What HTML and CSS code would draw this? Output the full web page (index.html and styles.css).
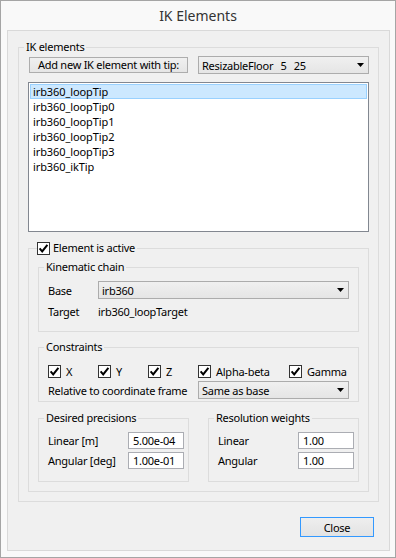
FILE: index.html
```html
<!DOCTYPE html>
<html>
<head>
<meta charset="utf-8">
<title>IK Elements</title>
<link rel="stylesheet" href="styles.css">
</head>
<body>
<div class="window">
  <div class="titlebar">IK Elements</div>
  <div class="client">
    <fieldset class="group outer">
      <legend>IK elements</legend>
      <div class="tiprow">
        <button class="btn add">Add new IK element with tip:</button>
        <div class="combo tipcombo"><span>ResizableFloor  5  25</span><svg class="arrow" viewBox="0 0 7 4"><path d="M0 0H7L3.5 4Z"/></svg></div>
      </div>
      <ul class="list">
        <li class="sel">irb360_loopTip</li>
        <li>irb360_loopTip0</li>
        <li>irb360_loopTip1</li>
        <li>irb360_loopTip2</li>
        <li>irb360_loopTip3</li>
        <li>irb360_ikTip</li>
      </ul>
      <fieldset class="group active">
        <legend class="chklegend"><span class="chk"><svg viewBox="0 0 11 11"><path d="M1.6 5.4L4.2 8.4L9.4 1.8"/></svg></span>Element is active</legend>
        <fieldset class="group kin">
          <legend>Kinematic chain</legend>
          <div class="row">
            <span class="lbl-base">Base</span>
            <div class="combo basecombo"><span>irb360</span><svg class="arrow" viewBox="0 0 7 4"><path d="M0 0H7L3.5 4Z"/></svg></div>
          </div>
          <div class="row">
            <span class="lbl-base">Target</span>
            <span>irb360_loopTarget</span>
          </div>
        </fieldset>
        <fieldset class="group cons">
          <legend>Constraints</legend>
          <div class="checks">
            <label class="cb c1"><span class="chk"><svg viewBox="0 0 11 11"><path d="M1.6 5.4L4.2 8.4L9.4 1.8"/></svg></span>X</label>
            <label class="cb c1"><span class="chk"><svg viewBox="0 0 11 11"><path d="M1.6 5.4L4.2 8.4L9.4 1.8"/></svg></span>Y</label>
            <label class="cb c1"><span class="chk"><svg viewBox="0 0 11 11"><path d="M1.6 5.4L4.2 8.4L9.4 1.8"/></svg></span>Z</label>
            <label class="cb c4"><span class="chk"><svg viewBox="0 0 11 11"><path d="M1.6 5.4L4.2 8.4L9.4 1.8"/></svg></span>Alpha-beta</label>
            <label class="cb"><span class="chk"><svg viewBox="0 0 11 11"><path d="M1.6 5.4L4.2 8.4L9.4 1.8"/></svg></span>Gamma</label>
          </div>
          <div class="row relrow">
            <span class="lbl-rel">Relative to coordinate frame</span>
            <div class="combo relcombo"><span>Same as base</span><svg class="arrow" viewBox="0 0 7 4"><path d="M0 0H7L3.5 4Z"/></svg></div>
          </div>
        </fieldset>
        <div class="pair">
          <fieldset class="group sub">
            <legend>Desired precisions</legend>
            <div class="field"><span>Linear [m]</span><input type="text" value="5.00e-04"></div>
            <div class="field"><span>Angular [deg]</span><input type="text" value="1.00e-01"></div>
          </fieldset>
          <fieldset class="group sub">
            <legend>Resolution weights</legend>
            <div class="field"><span>Linear</span><input type="text" value="1.00"></div>
            <div class="field"><span>Angular</span><input type="text" value="1.00"></div>
          </fieldset>
        </div>
      </fieldset>
    </fieldset>
    <div class="closerow"><button class="btn close">Close</button></div>
  </div>
</div>
</body>
</html>
```
FILE: styles.css
```css
* { box-sizing: border-box; }
html, body { margin: 0; padding: 0; }
body {
  width: 396px;
  height: 558px;
  overflow: hidden;
  font-family: "Noto Sans", "Open Sans", sans-serif;
  font-size: 11px;
  letter-spacing: -0.25px;
  color: #000;
  background: #fff;
}
.window {
  width: 396px;
  height: 558px;
  border: 1px solid #a5a5a5;
  background: #f9f9f9;
  display: flex;
  flex-direction: column;
}
.titlebar {
  height: 29px;
  line-height: 30px;
  text-align: center;
  font-size: 14px;
  letter-spacing: 0;
  color: #333;
}
.client {
  height: 521px;
  margin: 0 5px 0 6px;
  border: 1px solid #d9d9d9;
  background: #f0f0f0;
  display: flex;
  flex-direction: column;
}
.group {
  border: 1px solid #dcdcdc;
  margin: 0;
  min-width: 0;
  padding: 0 9px;
}
.group > legend {
  padding: 0 2px;
  margin-left: -4px;
  height: 14px;
  line-height: 14px;
}
.outer { margin: 9px 10px 0; padding-bottom: 9px; }
.tiprow {
  display: flex;
  align-items: center;
  justify-content: space-between;
  height: 18px;
  margin-top: 2px;
}
.btn {
  font: inherit;
  letter-spacing: inherit;
  color: #000;
  border: 1px solid #adadad;
  background: linear-gradient(#f0f0f0, #e5e5e5);
  padding: 0;
  margin: 0;
}
.add { width: 159px; height: 16px; line-height: 14px; margin-left: 1px; }
.combo {
  display: flex;
  align-items: center;
  justify-content: space-between;
  height: 18px;
  border: 1px solid #acacac;
  background: linear-gradient(#f0f0f0, #e5e5e5);
  padding: 0 4px 0 3px;
  white-space: pre;
  flex-shrink: 0;
}
.tipcombo { width: 171px; word-spacing: 1px; }
.arrow { width: 7px; height: 4px; fill: #000; }
.list {
  list-style: none;
  margin: 8px 0 0;
  padding: 1px;
  height: 150px;
  border: 1px solid #828790;
  background: #fff;
  letter-spacing: -0.1px;
}
.list li {
  height: 15px;
  line-height: 13px;
  border: 1px solid transparent;
  padding-left: 2px;
}
.list li.sel { background: #cce8ff; border-color: #99d1ff; }
.active { margin-top: 8px; padding: 4px 9px 9px; }
.group > legend.chklegend {
  margin-left: -1px;
  padding: 0 2px 0 0;
  height: 16px;
  line-height: 16px;
  display: flex;
  align-items: center;
}
.chk {
  width: 13px;
  height: 13px;
  border: 1px solid #333;
  background: #fff;
  display: inline-flex;
  margin-right: 3px;
  flex-shrink: 0;
}
.chk svg { width: 11px; height: 11px; fill: none; stroke: #000; stroke-width: 2; }
.kin { padding: 7px 9px 11px; }
.row { display: flex; align-items: center; height: 18px; }
.row + .row { margin-top: 3px; }
.lbl-base { width: 50px; flex-shrink: 0; }
.basecombo { width: 251px; }
.cons { margin-top: 8px; padding: 9px 9px 2px; }
.checks { display: flex; align-items: center; height: 16px; }
.cb { display: flex; align-items: center; flex-shrink: 0; }
.cb .chk { margin-right: 5px; }
.c1 { width: 50px; }
.c4 { width: 91px; }
.relrow { margin-top: 2px; }
.lbl-rel { width: 150px; flex-shrink: 0; }
.relcombo { width: 151px; }
.pair { display: flex; gap: 19px; margin-top: 9px; }
.sub { width: 151px; padding: 7px 4px 12px 9px; }
.field { display: flex; align-items: center; height: 17px; }
.field + .field { margin-top: 3px; }
.field span { width: 80px; flex-shrink: 0; }
.field input {
  width: 56px;
  height: 17px;
  border: 1px solid #abadb3;
  background: #fff;
  font: inherit;
  letter-spacing: inherit;
  color: #000;
  padding: 0 4px;
  margin: 0;
  outline: none;
  flex-shrink: 0;
}
.closerow { display: flex; justify-content: flex-end; margin: 15px 15px 0 0; }
.close {
  width: 74px;
  height: 20px;
  border-color: #3399ff;
  background: linear-gradient(#eeeeee, #e3e3e3);
}
```
